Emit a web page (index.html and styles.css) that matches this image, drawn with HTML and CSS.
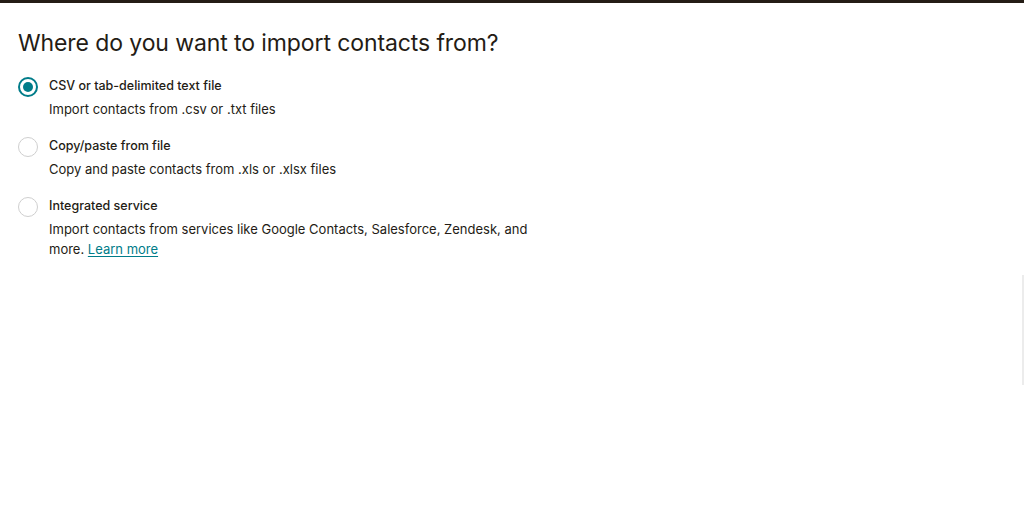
FILE: index.html
```html
<!DOCTYPE html>
<html lang="en">
<head>
    <meta charset="UTF-8">
    <title>Import contacts</title>
    <link rel="stylesheet" href="styles.css">
</head>
<body>
    <div class="topbar"></div>
    <div class="page">
        <h1>Where do you want to import contacts from?</h1>
        <div class="options">
            <label class="option">
                <input type="radio" name="source" value="csv" checked>
                <span class="radio"></span>
                <span class="text">
                    <span class="title">CSV or tab-delimited text file</span>
                    <span class="desc">Import contacts from .csv or .txt files</span>
                </span>
            </label>
            <label class="option">
                <input type="radio" name="source" value="paste">
                <span class="radio"></span>
                <span class="text">
                    <span class="title">Copy/paste from file</span>
                    <span class="desc">Copy and paste contacts from .xls or .xlsx files</span>
                </span>
            </label>
            <label class="option">
                <input type="radio" name="source" value="integration">
                <span class="radio"></span>
                <span class="text">
                    <span class="title">Integrated service</span>
                    <span class="desc">Import contacts from services like Google Contacts, Salesforce, Zendesk, and more. <a href="#">Learn more</a></span>
                </span>
            </label>
        </div>
    </div>
    <div class="scroll-edge"></div>
</body>
</html>
```

FILE: styles.css
```css
body {
    margin: 0;
    font-family: 'Inter', 'Liberation Sans', sans-serif;
    color: #241c15;
    background: #fff;
}
.topbar {
    height: 3px;
    background: #241c15;
}
.page {
    padding: 0 18px;
}
h1 {
    font-size: 23px;
    font-weight: 400;
    margin: 26px 0 19px;
    line-height: 28px;
    letter-spacing: -0.1px;
}
.options {
    display: flex;
    flex-direction: column;
    gap: 17px;
}
.option {
    display: flex;
    gap: 11px;
    cursor: pointer;
}
.option input {
    display: none;
}
.radio {
    flex: none;
    width: 20px;
    height: 20px;
    box-sizing: border-box;
    border: 1px solid #cfcfcf;
    border-radius: 50%;
    margin-top: 1px;
    display: flex;
    align-items: center;
    justify-content: center;
}
.option input:checked + .radio {
    border: 2px solid #007c89;
}
.option input:checked + .radio::after {
    content: "";
    width: 10px;
    height: 10px;
    border-radius: 50%;
    background: #007c89;
}
.text {
    display: flex;
    flex-direction: column;
    gap: 3px;
    max-width: 490px;
}
.title {
    font-size: 12.5px;
    font-weight: 500;
    line-height: 20px;
}
.desc {
    font-size: 13px;
    line-height: 20px;
}
.desc a {
    color: #007c89;
    text-decoration: underline;
    text-underline-offset: 2px;
}
.scroll-edge {
    position: absolute;
    right: 0;
    top: 275px;
    width: 2px;
    height: 110px;
    background: #ececec;
}
```
